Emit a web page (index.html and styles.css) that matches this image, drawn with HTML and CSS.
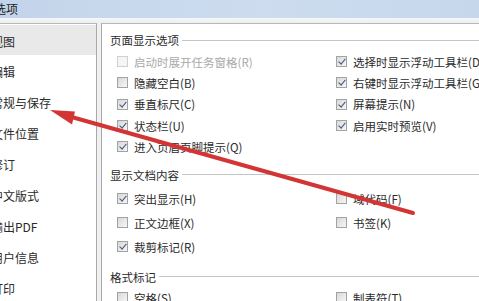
FILE: index.html
```html
<!DOCTYPE html>
<html lang="zh-CN">
   <head>
      <meta charset="UTF-8">
      <title>选项</title>
      <link rel="stylesheet" href="styles.css">
   </head>
   <body>
      <div class="titlebar"><span class="title">选项</span></div>
      <div class="strip"></div>
      <div class="main">
         <ul class="nav">
            <li class="active">视图</li>
            <li>编辑</li>
            <li>常规与保存</li>
            <li>文件位置</li>
            <li>修订</li>
            <li>中文版式</li>
            <li>输出PDF</li>
            <li>用户信息</li>
            <li>打印</li>
         </ul>
         <div class="content">
            <div class="group">
               <div class="legend">页面显示选项</div>
               <div class="opts opts-a">
                  <label class="opt off"><i class="cb"></i>启动时展开任务窗格(R)</label>
                  <label class="opt"><i class="cb"></i>隐藏空白(B)</label>
                  <label class="opt"><i class="cb on"></i>垂直标尺(C)</label>
                  <label class="opt"><i class="cb on"></i>状态栏(U)</label>
                  <label class="opt"><i class="cb on"></i>进入页眉页脚提示(Q)</label>
                  <label class="opt"><i class="cb on"></i>选择时显示浮动工具栏(D)</label>
                  <label class="opt"><i class="cb on"></i>右键时显示浮动工具栏(G)</label>
                  <label class="opt"><i class="cb on"></i>屏幕提示(N)</label>
                  <label class="opt"><i class="cb on"></i>启用实时预览(V)</label>
               </div>
            </div>
            <div class="group group-b">
               <div class="legend">显示文档内容</div>
               <div class="opts opts-b">
                  <label class="opt"><i class="cb on"></i>突出显示(H)</label>
                  <label class="opt"><i class="cb"></i>正文边框(X)</label>
                  <label class="opt"><i class="cb on"></i>裁剪标记(R)</label>
                  <label class="opt"><i class="cb"></i>域代码(F)</label>
                  <label class="opt"><i class="cb"></i>书签(K)</label>
               </div>
            </div>
            <div class="group group-c">
               <div class="legend">格式标记</div>
               <div class="opts opts-c">
                  <label class="opt"><i class="cb"></i>空格(S)</label>
                  <label class="opt"><i class="cb"></i>制表符(T)</label>
               </div>
            </div>
         </div>
      </div>
      <svg class="arrow" viewBox="0 0 479 301" width="479" height="301">
         <defs>
            <filter id="soft" x="-10%" y="-10%" width="120%" height="120%">
               <feGaussianBlur stdDeviation="0.6"/>
            </filter>
         </defs>
         <g filter="url(#soft)" fill="#d33636">
            <line x1="68" y1="116" x2="413" y2="213" stroke="#d33636" stroke-width="4" stroke-linecap="round"/>
            <polygon points="50,110 75,111.5 72,124.5"/>
         </g>
      </svg>
   </body>
</html>
```

FILE: styles.css
```css
body,html{
   margin:0;
   padding:0;
}
body{
   width:479px;
   height:301px;
   overflow:hidden;
   position:relative;
   font-family:"Noto Sans CJK SC","Noto Sans",sans-serif;
   color:#2a2a2a;
   background:#f0f0f0;
}
.titlebar{
   height:18px;
   line-height:17px;
   font-size:12px;
   color:#1c1c1c;
   background:linear-gradient(to right,#c3d4ea,#cddcef 55%,#c6d7ec);
   white-space:nowrap;
}
.title{
   display:inline-block;
   margin-left:-6px;
}
.strip{
   height:5px;
   background:linear-gradient(#f6f7f8,#eceef0);
}
.main{
   display:flex;
   height:278px;
}
.nav{
   list-style:none;
   margin:0;
   padding:1px 0 0;
   width:97px;
   box-sizing:border-box;
   background:#fff;
   border-top:1px solid #b8b8b8;
   border-right:1px solid #a8a8a8;
   font-size:12px;
}
.nav li{
   height:31px;
   line-height:31px;
   text-indent:-9px;
   white-space:nowrap;
   overflow:hidden;
}
.nav .active{
   height:30px;
   line-height:34px;
   background:#e9e9e9;
   margin-bottom:1px;
}
.content{
   flex:1;
   margin-left:4px;
   padding:8px 0 0 8px;
   background:#fff;
   border-top:1px solid #b8b8b8;
   border-left:1px solid #a8a8a8;
   overflow:hidden;
}
.legend{
   display:flex;
   align-items:center;
   gap:3px;
   height:16px;
   font-size:11.5px;
   color:#2a2a2a;
   white-space:nowrap;
}
.legend::after{
   content:"";
   flex:1;
   height:1px;
   background:#c4c4c4;
}
.group-b{
   margin-top:9.5px;
}
.group-c{
   margin-top:10px;
}
.opts{
   display:grid;
   grid-auto-flow:column;
   grid-template-columns:219px 1fr;
   padding-left:7px;
}
.opts-a{
   grid-template-rows:repeat(5,21.3px);
   margin-top:3px;
}
.opts-b{
   grid-template-rows:repeat(3,24px);
   margin-top:4px;
}
.opts-c{
   grid-template-rows:22px;
   margin-top:2px;
}
.opt{
   display:flex;
   align-items:center;
   gap:6px;
   font-size:11.5px;
   white-space:nowrap;
   color:#2a2a2a;
}
.cb{
   position:relative;
   flex:none;
   width:11px;
   height:11px;
   box-sizing:border-box;
   border:1px solid #a2a2a2;
   background:linear-gradient(135deg,#d8d8d8,#f7f7f7);
}
.cb.on::after{
   content:"";
   position:absolute;
   left:3px;
   top:0;
   width:2.5px;
   height:6px;
   border:solid #46587f;
   border-width:0 1.6px 1.6px 0;
   transform:rotate(40deg);
}
.off{
   color:#a9a9a9;
}
.off .cb{
   border-color:#d0d0d0;
   background:#f5f5f5;
}
.arrow{
   position:absolute;
   top:0;
   left:0;
   pointer-events:none;
}
```
